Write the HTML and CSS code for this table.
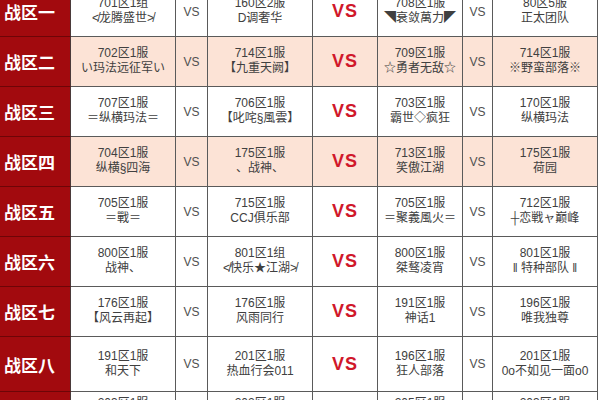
FILE: index.html
```html
<!DOCTYPE html>
<html lang="zh">
<head>
<meta charset="utf-8">
<link rel="stylesheet" href="styles.css">
</head>
<body>
<div class="sheet">
  <div class="zone">战区一</div>
  <div class="team"><span>701区1组</span><span>≮龙腾盛世≯</span></div>
  <div class="vs">VS</div>
  <div class="team"><span>160区2服</span><span>D调奢华</span></div>
  <div class="bigvs">VS</div>
  <div class="team"><span>708区1服</span><span>◥衰敛萬力◤</span></div>
  <div class="vs">VS</div>
  <div class="team"><span>80区5服</span><span>正太团队</span></div>

  <div class="zone">战区二</div>
  <div class="team alt"><span>702区1服</span><span>い玛法远征军い</span></div>
  <div class="vs alt">VS</div>
  <div class="team alt"><span>714区1服</span><span>【九重天阙】</span></div>
  <div class="bigvs alt">VS</div>
  <div class="team alt"><span>709区1服</span><span>☆勇者无敌☆</span></div>
  <div class="vs alt">VS</div>
  <div class="team alt"><span>714区1服</span><span>※野蛮部落※</span></div>

  <div class="zone">战区三</div>
  <div class="team"><span>707区1服</span><span>＝纵横玛法＝</span></div>
  <div class="vs">VS</div>
  <div class="team"><span>706区1服</span><span>【叱咤§風雲】</span></div>
  <div class="bigvs">VS</div>
  <div class="team"><span>703区1服</span><span>霸世◇疯狂</span></div>
  <div class="vs">VS</div>
  <div class="team"><span>170区1服</span><span>纵横玛法</span></div>

  <div class="zone">战区四</div>
  <div class="team alt"><span>704区1服</span><span>纵横§四海</span></div>
  <div class="vs alt">VS</div>
  <div class="team alt"><span>175区1服</span><span>、战神、</span></div>
  <div class="bigvs alt">VS</div>
  <div class="team alt"><span>713区1服</span><span>笑傲江湖</span></div>
  <div class="vs alt">VS</div>
  <div class="team alt"><span>175区1服</span><span>荷园</span></div>

  <div class="zone">战区五</div>
  <div class="team"><span>705区1服</span><span>＝戰＝</span></div>
  <div class="vs">VS</div>
  <div class="team"><span>715区1服</span><span>CCJ俱乐部</span></div>
  <div class="bigvs">VS</div>
  <div class="team"><span>705区1服</span><span>＝聚義風火＝</span></div>
  <div class="vs">VS</div>
  <div class="team"><span>712区1服</span><span>┼恋戦ャ巅峰</span></div>

  <div class="zone">战区六</div>
  <div class="team"><span>800区1服</span><span>战神、</span></div>
  <div class="vs">VS</div>
  <div class="team"><span>801区1组</span><span>≮快乐★江湖≯</span></div>
  <div class="bigvs">VS</div>
  <div class="team"><span>800区1服</span><span>桀骜凌宵</span></div>
  <div class="vs">VS</div>
  <div class="team"><span>801区1服</span><span>‖ 特种部队 ‖</span></div>

  <div class="zone">战区七</div>
  <div class="team"><span>176区1服</span><span>【风云再起】</span></div>
  <div class="vs">VS</div>
  <div class="team"><span>176区1服</span><span>风雨同行</span></div>
  <div class="bigvs">VS</div>
  <div class="team"><span>191区1服</span><span>神话1</span></div>
  <div class="vs">VS</div>
  <div class="team"><span>196区1服</span><span>唯我独尊</span></div>

  <div class="zone">战区八</div>
  <div class="team"><span>191区1服</span><span>和天下</span></div>
  <div class="vs">VS</div>
  <div class="team"><span>201区1服</span><span>热血行会011</span></div>
  <div class="bigvs">VS</div>
  <div class="team"><span>196区1服</span><span>狂人部落</span></div>
  <div class="vs">VS</div>
  <div class="team"><span>201区1服</span><span>0o不如见一面o0</span></div>

  <div class="zone">战区九</div>
  <div class="team last"><span>203区1服</span><span>天下</span></div>
  <div class="vs">VS</div>
  <div class="team last"><span>202区1服</span><span>王者</span></div>
  <div class="bigvs">VS</div>
  <div class="team last"><span>205区1服</span><span>霸业</span></div>
  <div class="vs">VS</div>
  <div class="team last"><span>203区1服</span><span>天尊</span></div>
</div>
</body>
</html>
```

FILE: styles.css
```css
html, body {
  margin: 0;
  padding: 0;
  background: #ffffff;
  overflow: hidden;
}

.sheet {
  display: grid;
  grid-template-columns: 71px 105px 32px 105px 65px 85px 30px 105px;
  grid-template-rows: repeat(7, 50px) 55px 50px;
  width: 598px;
  margin-top: -13px;
  font-family: "Liberation Sans", "Noto Sans CJK SC", sans-serif;
}

.sheet > div {
  box-sizing: border-box;
  border-right: 1px solid #5a5a5a;
  border-bottom: 1px solid #5a5a5a;
  display: flex;
  align-items: center;
  justify-content: center;
  background: #ffffff;
}

.sheet > div.alt {
  background: #fce3d6;
}

.sheet > .zone {
  background: #a20a0e;
  color: #ffffff;
  font-family: "Noto Sans CJK SC", sans-serif;
  font-weight: 700;
  font-size: 17px;
  justify-content: flex-start;
  padding-left: 4px;
  border-bottom: 1px solid #6e0507;
  border-right: 1px solid #4a3a3a;
}

.team {
  flex-direction: column;
  color: #404040;
  font-size: 12px;
  line-height: 15px;
  padding-bottom: 1px;
}

.sheet > .team.last {
  justify-content: flex-start;
  padding-top: 4px;
}

.team span {
  display: block;
  white-space: nowrap;
}

.vs {
  color: #505050;
  font-size: 12px;
}

.bigvs {
  color: #d0182a;
  font-weight: 700;
  font-size: 18px;
  letter-spacing: 1px;
}
```
